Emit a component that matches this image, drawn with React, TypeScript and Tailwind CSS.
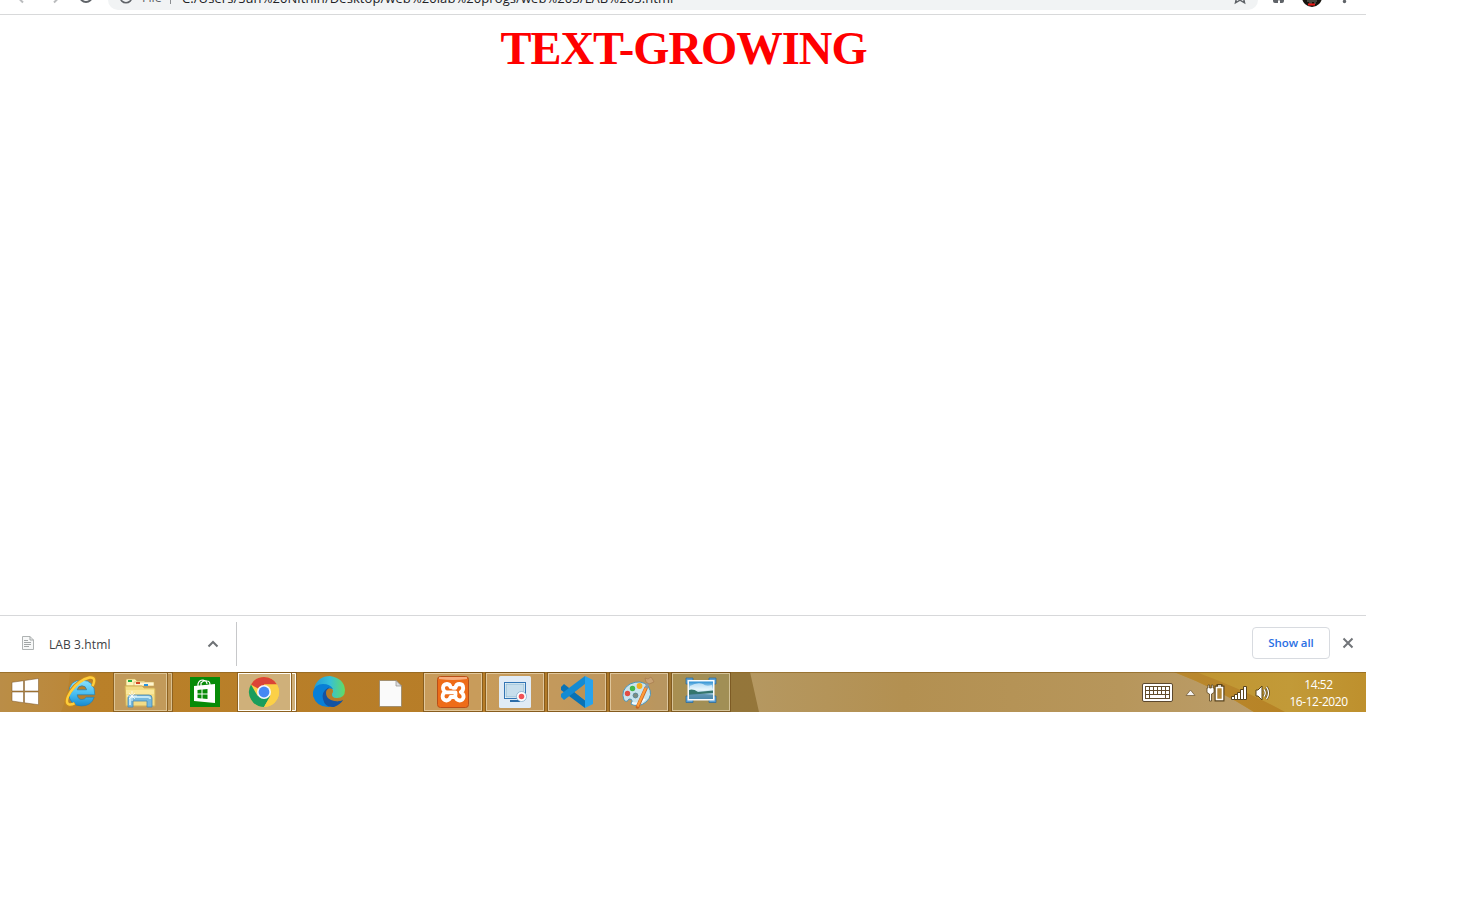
import type { ReactNode } from "react";

function Slot({ children, label }: { children: ReactNode; label: string }) {
  return (
    <button aria-label={label} className="h-10 w-[62px] shrink-0">
      <svg width="62" height="40" viewBox="0 0 62 40">{children}</svg>
    </button>
  );
}

function Frame({ fill = "#fff", opacity = 0.24 }: { fill?: string; opacity?: number }) {
  return (
    <g>
      <rect x="1.5" y="0.5" width="59" height="39" fill="none" stroke="#704d18" strokeOpacity=".65" />
      <rect x="2" y="1" width="58" height="38" fill={fill} fillOpacity={opacity} />
      <rect x="2.5" y="1.5" width="57" height="37" fill="none" stroke="#f0dfbd" strokeOpacity=".65" />
    </g>
  );
}

function StackedFrame({ active = false }: { active?: boolean }) {
  const stroke = active ? "#fffdf5" : "#e8d5ac";
  return (
    <g>
      <rect x="1" y="0" width="60" height="40" fill="#77521c" fillOpacity=".65" />
      <rect x="2" y="1" width="53" height="38" fill={active ? "#cfb07a" : "#c29a5a"} />
      <rect x="2.5" y="1.5" width="52" height="37" fill="none" stroke={stroke} strokeOpacity={active ? 1 : 0.7} />
      <rect x="56" y="1" width="4" height="38" fill={active ? "#cfb07a" : "#bd9250"} />
      <path d="M56 1.5H59.5V38.5H56" fill="none" stroke={stroke} strokeOpacity={active ? 1 : 0.7} />
    </g>
  );
}

function TopBar() {
  return (
    <header className="flex h-[15px] overflow-hidden border-b border-[#d8d9da] bg-white text-[#5f6368]">
      <svg className="shrink-0" width="108" height="14" fill="none">
        <path d="M23 2.5L17 -3.5L23 -9.5" stroke="#babcbe" strokeWidth="2" />
        <path d="M54 2.5L60 -3.5L54 -9.5" stroke="#babcbe" strokeWidth="2" />
        <circle cx="86" cy="-4" r="6" stroke="#5f6368" strokeWidth="2" />
      </svg>
      <div className="flex h-[10px] w-[1150px] shrink-0 items-end rounded-b-[14px] bg-[#f1f3f4]">
        <svg className="shrink-0" width="34" height="10" fill="none">
          <circle cx="18" cy="-3" r="5.8" stroke="#5f6368" strokeWidth="1.6" />
        </svg>
        <span className="mb-[4px] w-[28px] shrink-0 font-['Open_Sans',sans-serif] text-[12.5px] leading-[16px]">File</span>
        <span className="mb-[6px] h-4 w-px shrink-0 bg-[#8b8e91]" />
        <span className="mb-[4px] ml-[11px] w-[1046px] shrink-0 whitespace-nowrap font-['Open_Sans',sans-serif] text-[13px] leading-[16px] tracking-[0.08px] text-[#202124]">C:/Users/Sun%20Nithin/Desktop/web%20lab%20progs/web%203/LAB%203.html</span>
        <svg className="-ml-0.5 shrink-0" width="30" height="10" fill="none">
          <path d="M9.5 2.8L10.5-2L14-4L17.5-2L18.5 2.8L14 .2Z" stroke="#5f6368" strokeWidth="1.5" />
        </svg>
      </div>
      <svg className="shrink-0" width="108" height="14">
        <path d="M15-4H26V1Q26 3 24 3H22V1Q21-1 20 1V3H17Q15 3 15 1Z" fill="#5f6368" />
        <circle cx="54" cy="-3" r="10" fill="#17140f" />
        <path d="M49 1H59M51 3H54M56 3H58" stroke="#777a70" />
        <path d="M50 4.5H57" stroke="#ee1717" strokeWidth="2" />
        <circle cx="86.5" cy="1.5" r="1.7" fill="#5f6368" />
      </svg>
    </header>
  );
}

function DownloadBar() {
  return (
    <section className="flex h-[57px] items-center border-t border-[#d7d8da] bg-white font-['Open_Sans',sans-serif]">
      <button className="flex h-11 w-[237px] items-center border-r border-[#c7c8ca] pl-[22px] text-left">
        <svg width="12" height="14" className="mb-[2px] shrink-0" fill="none">
          <path d="M.5.5H8L11.5 4V13.5H.5Z" fill="#f7f8f8" stroke="#afb3b3" />
          <path d="M8 .5V4H11.5M2 4.5H6M2 6.5H9M2 8.5H9M2 10.5H7" stroke="#a2a6a6" />
        </svg>
        <span className="ml-[15px] w-[158px] pt-[2px] text-[12px] tracking-[0.1px] text-[#3c4043]">LAB 3.html</span>
        <svg width="12" height="10" className="shrink-0" fill="none">
          <path d="M1.5 7.5L6 3L10.5 7.5" stroke="#6e7275" strokeWidth="2" />
        </svg>
      </button>
      <button className="mb-[2px] ml-auto h-8 w-[78px] rounded-[4px] border border-[#d8dbe0] text-[11.5px] font-semibold tracking-[-0.1px] text-[#2b70e4]">Show all</button>
      <button aria-label="Close" className="mb-[2px] ml-3 mr-3">
        <svg width="12" height="12" fill="none">
          <path d="M1.5 1.5L10.5 10.5M10.5 1.5L1.5 10.5" stroke="#727579" strokeWidth="2" />
        </svg>
      </button>
    </section>
  );
}

function Taskbar() {
  return (
    <footer className="relative flex h-10 overflow-hidden">
      <svg className="absolute inset-0" width="1366" height="40" preserveAspectRatio="none">
        <defs>
          <linearGradient id="wood">
            <stop offset="0" stopColor="#b7893f" /><stop offset=".045" stopColor="#b88331" />
            <stop offset=".06" stopColor="#b98029" /><stop offset=".35" stopColor="#b77d28" />
            <stop offset=".47" stopColor="#a8752a" /><stop offset=".52" stopColor="#94763a" /><stop offset="1" stopColor="#97743a" />
          </linearGradient>
          <linearGradient id="sand">
            <stop offset="0" stopColor="#b59861" /><stop offset=".25" stopColor="#b39051" />
            <stop offset=".6" stopColor="#b7965b" /><stop offset="1" stopColor="#bea376" />
          </linearGradient>
          <linearGradient id="gold">
            <stop offset="0" stopColor="#c0942f" /><stop offset=".6" stopColor="#c29a38" /><stop offset="1" stopColor="#be902d" />
          </linearGradient>
          <linearGradient id="band">
            <stop offset="0" stopColor="#b9882f" /><stop offset="1" stopColor="#b78325" />
          </linearGradient>
        </defs>
        <path d="M0 0H1366V40H0Z" fill="url(#wood)" />
        <path d="M0 0H70Q69 20 61 40H0Z" fill="#c7a66e" fillOpacity=".17" />
        <path d="M750 0H1366V40H759Z" fill="url(#sand)" />
        <path d="M1174 0H1366V40H1254Q1216 16 1174 0Z" fill="url(#gold)" />
        <path d="M1174 0H1196Q1245 18 1285 40H1254Q1216 16 1174 0Z" fill="url(#band)" />
        <path d="M0 .5H1366" stroke="#8a621f" strokeOpacity=".65" />
      </svg>
      <nav className="relative flex">
        <button aria-label="Start" className="h-10 w-[50px]">
          <svg width="50" height="40"><path d="M12 10.3L23.5 8.7V19H12ZM24.5 8.5L38.5 6.5V19H24.5ZM12 20H23.5V30.7L12 29ZM24.5 20H38.5V32.7L24.5 30.8Z" fill="#fff" stroke="#765326" strokeWidth=".5" /></svg>
        </button>
        <Slot label="Internet Explorer">
          <defs><linearGradient id="ie" x2="0" y2="1"><stop stopColor="#8be2ff" /><stop offset=".55" stopColor="#45bcf0" /><stop offset="1" stopColor="#1689cf" /></linearGradient></defs>
          <path d="M44.8 22.8H27.2Q27.8 27.5 31.8 27.5Q34.8 27.5 36.2 25.2H44.2Q41.4 34 31.4 34Q19 33.5 18.8 21Q19 8.2 31.8 8Q45 8.5 44.8 22.8ZM27.2 17.8H36.6Q36 13.8 32 13.8Q28 13.8 27.2 17.8Z" fill="url(#ie)" stroke="#287eae" strokeWidth=".7" />
          <path d="M42.5 14.5Q48 4 39.5 5Q29 7 20.5 19Q12.5 31 19 33Q21.5 33.6 25 31.5" fill="none" stroke="#c98a1c" strokeWidth="3.2" />
          <path d="M42.5 14Q47 4.8 39.5 5.5Q29 8 21 19.2Q14 30.4 19 32.4Q21 33 24.5 31.3" fill="none" stroke="#ffce3a" strokeWidth="2.4" />
        </Slot>
        <Slot label="File Explorer">
          <StackedFrame />
          <path d="M14 8Q14 7 15 7H23L25 9H32Q33 9 33 10V14H14Z" fill="#fff4bb" stroke="#c9a955" strokeWidth=".7" />
          <path d="M16 8H20V10H16Z" fill="#1fad42" /><path d="M22 10H42V14H22Z" fill="#fff5cf" stroke="#c9a955" strokeWidth=".6" />
          <path d="M24 10H28V12H24Z" fill="#d84723" /><path d="M32 12H36V14H32Z" fill="#2692df" />
          <path d="M13 14H30L32 16H42Q43 16 43 17V34H14Z" fill="#f3dc86" stroke="#d1af55" />
          <path d="M14 18H42V22H14Z" fill="#fff0ab" fillOpacity=".6" />
          <path d="M16 35V26Q16 23 19 23H37Q40 23 40 26V35H35V29H21V35Z" fill="#75b8dc" stroke="#4789b4" strokeWidth=".8" />
          <path d="M18 33V27Q18 25 20 25H36Q38 25 38 27" fill="none" stroke="#c0e6f5" strokeWidth="2" />
          <path d="M20 19V29M15 24H25M17 21L23 27M23 21L17 27" stroke="#fff" strokeWidth=".7" />
        </Slot>
        <Slot label="Store">
          <rect x="16" y="5" width="30" height="30" fill="#078b08" />
          <path d="M20 14L41 12V31L20 29Z" fill="#fff" />
          <path d="M24 14V12Q25 8 29 8Q33 9 33 12M27 14V11Q30 8 33 9Q36 9 36 13" fill="none" stroke="#fff" strokeWidth="1.2" />
          <path d="M23.5 18L27.5 17.5V21.5H23.5ZM28.5 17.5L33.5 17V21.5H28.5ZM23.5 22.5H27.5V26.5L23.5 26ZM28.5 22.5H33.5V27L28.5 26.5Z" fill="#078b08" />
        </Slot>
        <Slot label="Chrome">
          <StackedFrame active />
          <circle cx="28" cy="20" r="15" fill="#fbd047" />
          <path d="M28 20L15 12.5A15 15 0 0 1 41 12.5H28Z" fill="#db4437" />
          <path d="M15 12.5A15 15 0 0 0 28 35L34.5 23.75L28 20L21.5 23.75Z" fill="#1a9d5c" />
          <path d="M34.5 23.75L28 35A15 15 0 0 0 41 12.5H28Z" fill="#fbd047" />
          <circle cx="28" cy="20" r="7" fill="#f5f7fa" /><circle cx="28" cy="20" r="5.4" fill="#4688f4" />
        </Slot>
        <Slot label="Edge">
          <defs><linearGradient id="edgeTop"><stop stopColor="#219cd7" /><stop offset=".5" stopColor="#35bfd9" /><stop offset="1" stopColor="#62dc63" /></linearGradient></defs>
          <g transform="translate(15 4)">
            <path d="M1 12Q5 0 17 0Q31 2 32 14Q32 22 24 22Q17 22 19 18Q22 14 17 11Q10 7 1 12Z" fill="url(#edgeTop)" />
            <path d="M0 16Q2 8 10 8Q17 8 20 13Q13 11 11 18Q10 26 17 31Q4 32 0 20Z" fill="#087fd6" />
            <path d="M16 11Q8 16 10 23Q12 32 21 31Q28 28 30 24Q22 27 17 22Q12 17 16 11Z" fill="#1453a1" />
            <path d="M19 13Q13 12 13 17Q13 22 18 24Q26 27 31 23Q18 24 19 18Z" fill="#b57b29" />
          </g>
        </Slot>
        <Slot label="Document">
          <path d="M19.5 8.5H36L41.5 14V34.5H19.5Z" fill="#fafafa" stroke="#8b7c62" strokeWidth=".7" />
          <path d="M36 8.5V14H41.5Z" fill="#dedede" stroke="#8d8d8d" strokeWidth=".7" />
        </Slot>
        <Slot label="XAMPP">
          <Frame />
          <rect x="15.5" y="4.5" width="31" height="31" rx="3" fill="#ee6c18" stroke="#b94f18" />
          <path d="M17 5H45V7Q31 9 17 7Z" fill="#fff" fillOpacity=".45" />
          <g fill="none" stroke="#fff" strokeWidth="3.8" strokeLinecap="round" strokeLinejoin="round">
            <path d="M31 15.8H33.5Q34 12 37.5 12Q41.2 12.2 41.2 16Q41 19 38.8 20Q41.6 21.5 41.6 25Q41 28.5 37.7 28.5Q34 28.2 33.5 25H28.5Q28 28.2 24.5 28.5Q20.7 28 20.6 24.5Q20.8 21 23.3 20Q21 18.5 21 15.5Q21.5 12.2 25 12Q28 12.2 28.5 15" />
            <path d="M23.5 20.3H33.5V23" />
          </g>
        </Slot>
        <Slot label="Screen recorder">
          <Frame />
          <rect x="15" y="4" width="32" height="32" rx="1.5" fill="#e0ebf6" />
          <rect x="20.5" y="10.5" width="21" height="16" fill="#fff" stroke="#3275b5" />
          <rect x="22" y="12" width="18" height="13" fill="#c7deec" stroke="#7bb0cd" strokeWidth=".7" />
          <path d="M26 29H36" stroke="#2d6da9" strokeWidth="2" />
          <circle cx="37.5" cy="24.5" r="5" fill="#fff" stroke="#79a6ca" strokeWidth=".7" /><circle cx="37.5" cy="24.5" r="2.8" fill="#f25258" />
        </Slot>
        <Slot label="Visual Studio Code">
          <Frame />
          <path d="M15 15L18 12L41 30L39 36L15 18Z" fill="#0872b5" />
          <path d="M15 25L18 28L41 11L39 4L15 22Z" fill="#148bd2" />
          <path d="M39 4L47 8V32L39 36Z" fill="#27a3ed" />
          <path d="M39 12V28L29 20Z" fill="#bc9354" />
        </Slot>
        <Slot label="Paint">
          <Frame />
          <path d="M16 28Q12 18 22 12Q33 7 40 14Q46 23 38 30Q31 36 23 32Q26 27 21 27Q19 31 16 28Z" fill="#c9e4ed" stroke="#4d95b9" strokeWidth="1" />
          <path d="M24 31Q31 33 37 27" fill="none" stroke="#f1fbff" strokeWidth="2" />
          <circle cx="19.5" cy="21.5" r="2.7" fill="#e24d43" /><circle cx="24.5" cy="16.5" r="2.7" fill="#42b84b" /><circle cx="31.5" cy="14" r="2.9" fill="#f5ae1e" />
          <circle cx="27.5" cy="23.5" r="2.4" fill="#7e8c80" stroke="#5a8997" />
          <path d="M29.5 35L38 16" stroke="#c96520" strokeWidth="3.6" strokeLinecap="round" /><path d="M29.5 34.5L38 15.5" stroke="#ff9c3a" strokeWidth="2.2" />
          <path d="M38 16L40 11" stroke="#8b9aa5" strokeWidth="2.6" />
          <path d="M38 10L37 6L40 7L43 5L45 8L46 10L41 12Z" fill="#c8a274" stroke="#a67b4f" strokeWidth=".7" />
        </Slot>
        <Slot label="Photo Gallery">
          <Frame fill="#b9c18b" opacity={0.35} />
          <path d="M16 12V6H23V9H19V12ZM39 6H46V12H43V9H39ZM16 24H19V27H23V30.5H16ZM43 24H46V30.5H39V27H43Z" fill="#5ba0d5" stroke="#24679d" strokeWidth=".7" />
          <rect x="17.5" y="8" width="27" height="20.5" fill="#fafcfd" />
          <defs><linearGradient id="sky" x2="0" y2="1"><stop stopColor="#2a8fd4" /><stop offset=".45" stopColor="#d9f0f8" /><stop offset="1" stopColor="#5197bf" /></linearGradient></defs>
          <path d="M19 9.5H43V27H19Z" fill="url(#sky)" />
          <path d="M20 14Q27 10 33 12Q36 15 42 13V17L34 19L20 18Z" fill="#eef9ff" fillOpacity=".65" />
          <path d="M19 18Q23 16.5 28 20L43 18.5V21L30 22L19 23Z" fill="#34756d" />
          <path d="M19 22.5Q27 21 43 23V27H19Z" fill="#477f9f" fillOpacity=".65" />
        </Slot>
      </nav>
      <div className="relative ml-auto flex">
        <svg width="145" height="40" className="shrink-0">
          <rect x="11.5" y="11.5" width="30" height="18" rx="1.5" fill="#fff" stroke="#5c482d" />
          <path d="M14 14H39V27H14Z" fill="#614c2c" />
          <path d="M15 16.5H38M15 20.5H38" stroke="#fff" strokeWidth="3" strokeDasharray="3 1" />
          <path d="M15 24.5H18M19 24.5H34M35 24.5H38" stroke="#fff" strokeWidth="3" />
          <path d="M55 23.5L59.5 18L64 23.5Z" fill="#f4f3f1" stroke="#77613e" strokeWidth=".8" />
          <path d="M77 13H78.6V16H80.4V13H82V16H83V20.5L80.5 22V29H78.5V22L76 20.5V16H77Z" fill="#fff" stroke="#59431c" strokeWidth=".8" />
          <path d="M84.5 14.5H86.5V13H90.5V14.5H92.5V28.5H84.5Z" fill="#59431c" stroke="#59431c" strokeWidth="2" />
          <path d="M85.5 15.5H91.5V27.5H85.5Z" fill="#b18535" stroke="#fff" strokeWidth="1.6" />
          <path d="M87 14H90" stroke="#fff" strokeWidth="1.5" />
          <g fill="#fff" stroke="#59431c"><path d="M100.5 24.5H103.5V27.5H100.5ZM103.5 22.5H106.5V27.5H103.5ZM106.5 20.5H109.5V27.5H106.5ZM109.5 17.5H112.5V27.5H109.5ZM112.5 14.5H115.5V27.5H112.5Z" /></g>
          <path d="M125 18H127L131 14V28L127 24H125Z" fill="#fff" stroke="#594417" strokeWidth="1" />
          <path d="M133 17.5Q135.5 21 133 24.5M135.5 15Q139.5 21 135.5 27" fill="none" stroke="#594417" strokeWidth="2.6" />
          <path d="M133 17.5Q135.5 21 133 24.5M135.5 15Q139.5 21 135.5 27" fill="none" stroke="#fff" strokeWidth="1.3" />
        </svg>
        <div className="flex w-[90px] flex-col items-center pt-1 pr-[5px] font-['Open_Sans',sans-serif] text-[12px] font-medium leading-[17px] tracking-[-0.45px] text-white">
          <time>14:52</time><time className="whitespace-nowrap">16-12-2020</time>
        </div>
      </div>
    </footer>
  );
}

export default function App() {
  return (
    <div className="h-[908px] overflow-hidden bg-white">
      <div className="flex h-[712px] w-[1366px] flex-col">
        <TopBar />
        <main className="flex flex-1 justify-center">
          <h1 className="mt-[6px] h-[55px] pl-px font-['Liberation_Serif',serif] text-[46.5px] font-bold leading-[55px] tracking-[-1px] text-[#ff0000]">TEXT-GROWING</h1>
        </main>
        <DownloadBar />
        <Taskbar />
      </div>
    </div>
  );
}
